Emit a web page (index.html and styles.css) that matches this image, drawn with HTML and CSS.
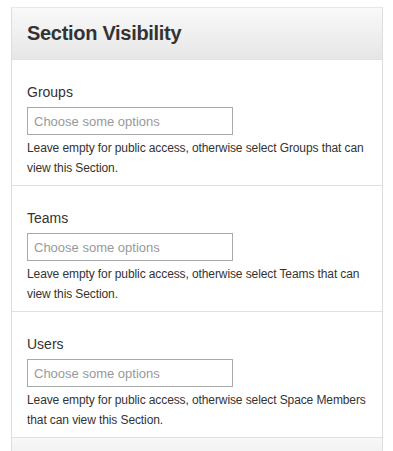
FILE: index.html
```html
<!DOCTYPE html>
<html lang="en">
<head>
    <meta charset="UTF-8">
    <meta name="viewport" content="width=device-width, initial-scale=1.0">
    <title>Section Visibility</title>
    <link rel="stylesheet" href="styles.css">
</head>
<body>
    <div class="panel">
        <div class="panel-header">
            <h2>Section Visibility</h2>
        </div>

        <div class="field">
            <label for="groups">Groups</label>
            <input type="text" id="groups" placeholder="Choose some options">
            <p class="help">Leave empty for public access, otherwise select Groups that can view this Section.</p>
        </div>

        <div class="field">
            <label for="teams">Teams</label>
            <input type="text" id="teams" placeholder="Choose some options">
            <p class="help">Leave empty for public access, otherwise select Teams that can view this Section.</p>
        </div>

        <div class="field">
            <label for="users">Users</label>
            <input type="text" id="users" placeholder="Choose some options">
            <p class="help">Leave empty for public access, otherwise select Space Members that can view this Section.</p>
        </div>

        <div class="panel-footer"></div>
    </div>
</body>
</html>
```

FILE: styles.css
```css
body {
    font-family: "Liberation Sans", Arial, sans-serif;
    background-color: #fff;
    color: #333;
    margin: 0;
    padding: 7px 10px 0 11px;
}

.panel {
    border: 1px solid #dedede;
    border-top-color: #e8e8e8;
    border-bottom: none;
    background-color: #fff;
}

.panel-header {
    height: 51px;
    background: linear-gradient(#f9f9f9, #e6e6e6);
    border-bottom: 1px solid #e2e2e2;
    padding: 0 15px;
    display: flex;
    align-items: center;
}

.panel-header h2 {
    margin: 0;
    font-size: 20px;
    font-weight: bold;
    letter-spacing: -0.3px;
    color: #333;
}

.field {
    padding: 22px 6px 7px 15px;
    border-bottom: 1px solid #e0e0e0;
}

.field label {
    display: block;
    font-size: 14px;
    line-height: 20px;
    margin-bottom: 5px;
}

.field input {
    display: block;
    box-sizing: border-box;
    width: 206px;
    height: 28px;
    margin: 0;
    padding: 0 6px;
    border: 1px solid #aaa;
    font-family: inherit;
    font-size: 13px;
    color: #333;
}

.field input::placeholder {
    color: #999;
}

.help {
    margin: 3px 0 0;
    font-size: 12px;
    line-height: 20px;
    letter-spacing: -0.1px;
}

.panel-footer {
    height: 20px;
    background: linear-gradient(#f8f8f8, #f0f0f0);
}
```
